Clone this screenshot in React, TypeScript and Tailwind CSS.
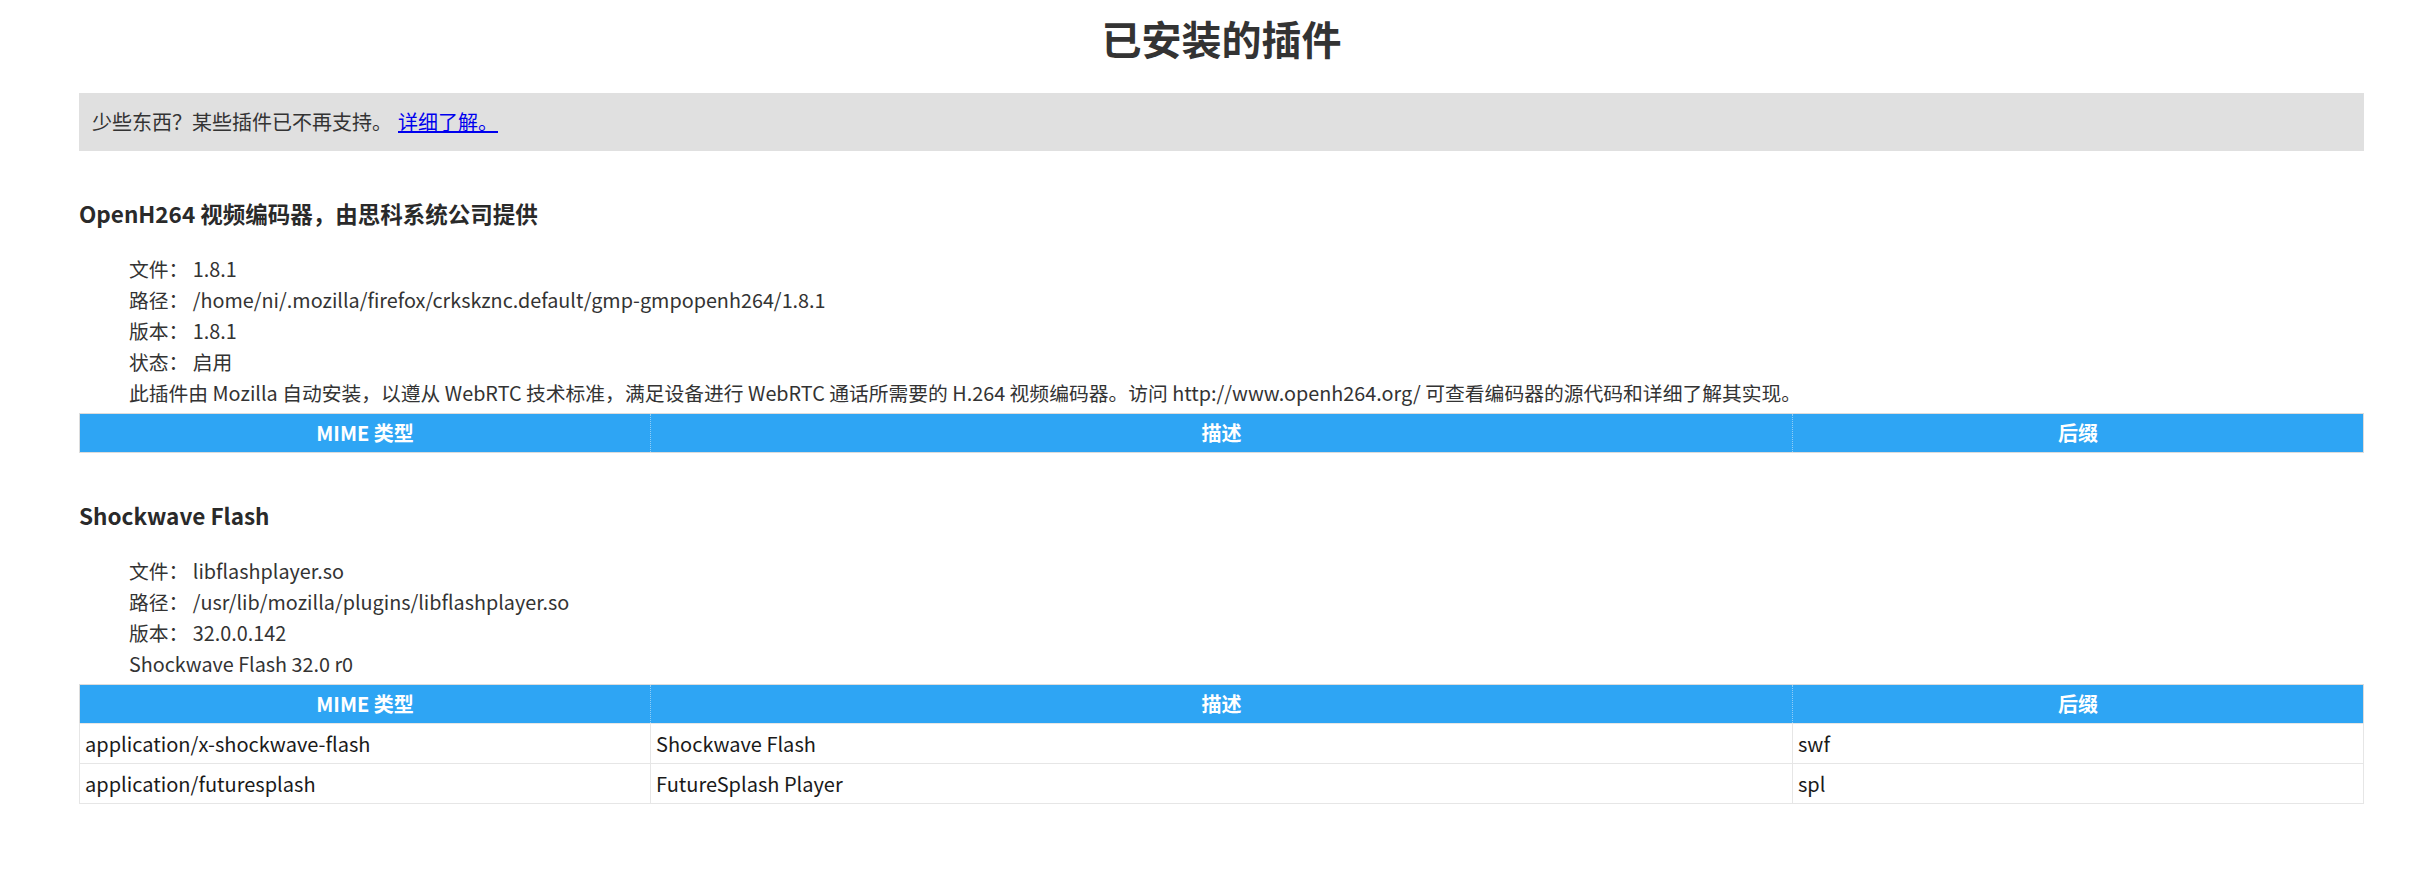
const plugins = [
  {
    name: 'OpenH264 视频编码器，由思科系统公司提供',
    lines: [
      '文件： 1.8.1',
      '路径： /home/ni/.mozilla/firefox/crkskznc.default/gmp-gmpopenh264/1.8.1',
      '版本： 1.8.1',
      '状态： 启用',
      '此插件由 Mozilla 自动安装，以遵从 WebRTC 技术标准，满足设备进行 WebRTC 通话所需要的 H.264 视频编码器。访问 http://www.openh264.org/ 可查看编码器的源代码和详细了解其实现。',
    ],
    rows: [] as string[][],
  },
  {
    name: 'Shockwave Flash',
    lines: [
      '文件： libflashplayer.so',
      '路径： /usr/lib/mozilla/plugins/libflashplayer.so',
      '版本： 32.0.0.142',
      'Shockwave Flash 32.0 r0',
    ],
    rows: [
      ['application/x-shockwave-flash', 'Shockwave Flash', 'swf'],
      ['application/futuresplash', 'FutureSplash Player', 'spl'],
    ],
  },
]

function MimeTable({ rows }: { rows: string[][] }) {
  return (
    <table className="w-full table-fixed border-collapse border border-[#dcdcdc] text-[20px]">
      <thead>
        <tr className="h-[39px] bg-[#2ea5f4] text-white font-bold">
          <th className="w-1/4 border-r border-dotted border-[#8fcdf7] font-bold">MIME 类型</th>
          <th className="w-1/2 border-r border-dotted border-[#8fcdf7] font-bold">描述</th>
          <th className="w-1/4 font-bold">后缀</th>
        </tr>
      </thead>
      <tbody>
        {rows.map((r) => (
          <tr key={r[0]} className="h-[40px] text-[#1a1a1a]">
            {r.map((c, i) => (
              <td key={i} className="border border-[#e6e6e6] px-[5px] leading-none">
                {c}
              </td>
            ))}
          </tr>
        ))}
      </tbody>
    </table>
  )
}

export default function App() {
  return (
    <div className="min-h-[880px] bg-white text-[#333] font-['Noto_Sans_CJK_SC','Noto_Sans',sans-serif]">
      <div className="ml-[79px] w-[2285px] pt-[14px]">
        <h1 className="text-center text-[40px] font-bold leading-[48px] text-[#333]">已安装的插件</h1>

        <div className="mt-[31px] h-[58px] flex items-center bg-[#e0e0e0] px-[13px] text-[20px]">
          少些东西？某些插件已不再支持。
          <a href="#" className="ml-[6px] text-[#0000ee] underline">详细了解。</a>
        </div>

        {plugins.map((p) => (
          <section key={p.name} className="mt-[46px]">
            <h2 className="text-[22.5px] font-bold leading-[32px] text-[#2a2a2a]">{p.name}</h2>
            <div className="mt-[24px] pl-[50px] text-[19.8px] leading-[31px] text-[#333]">
              {p.lines.map((l) => (
                <div key={l}>{l}</div>
              ))}
            </div>
            <div className="mt-[5px]">
              <MimeTable rows={p.rows} />
            </div>
          </section>
        ))}
      </div>
    </div>
  )
}
